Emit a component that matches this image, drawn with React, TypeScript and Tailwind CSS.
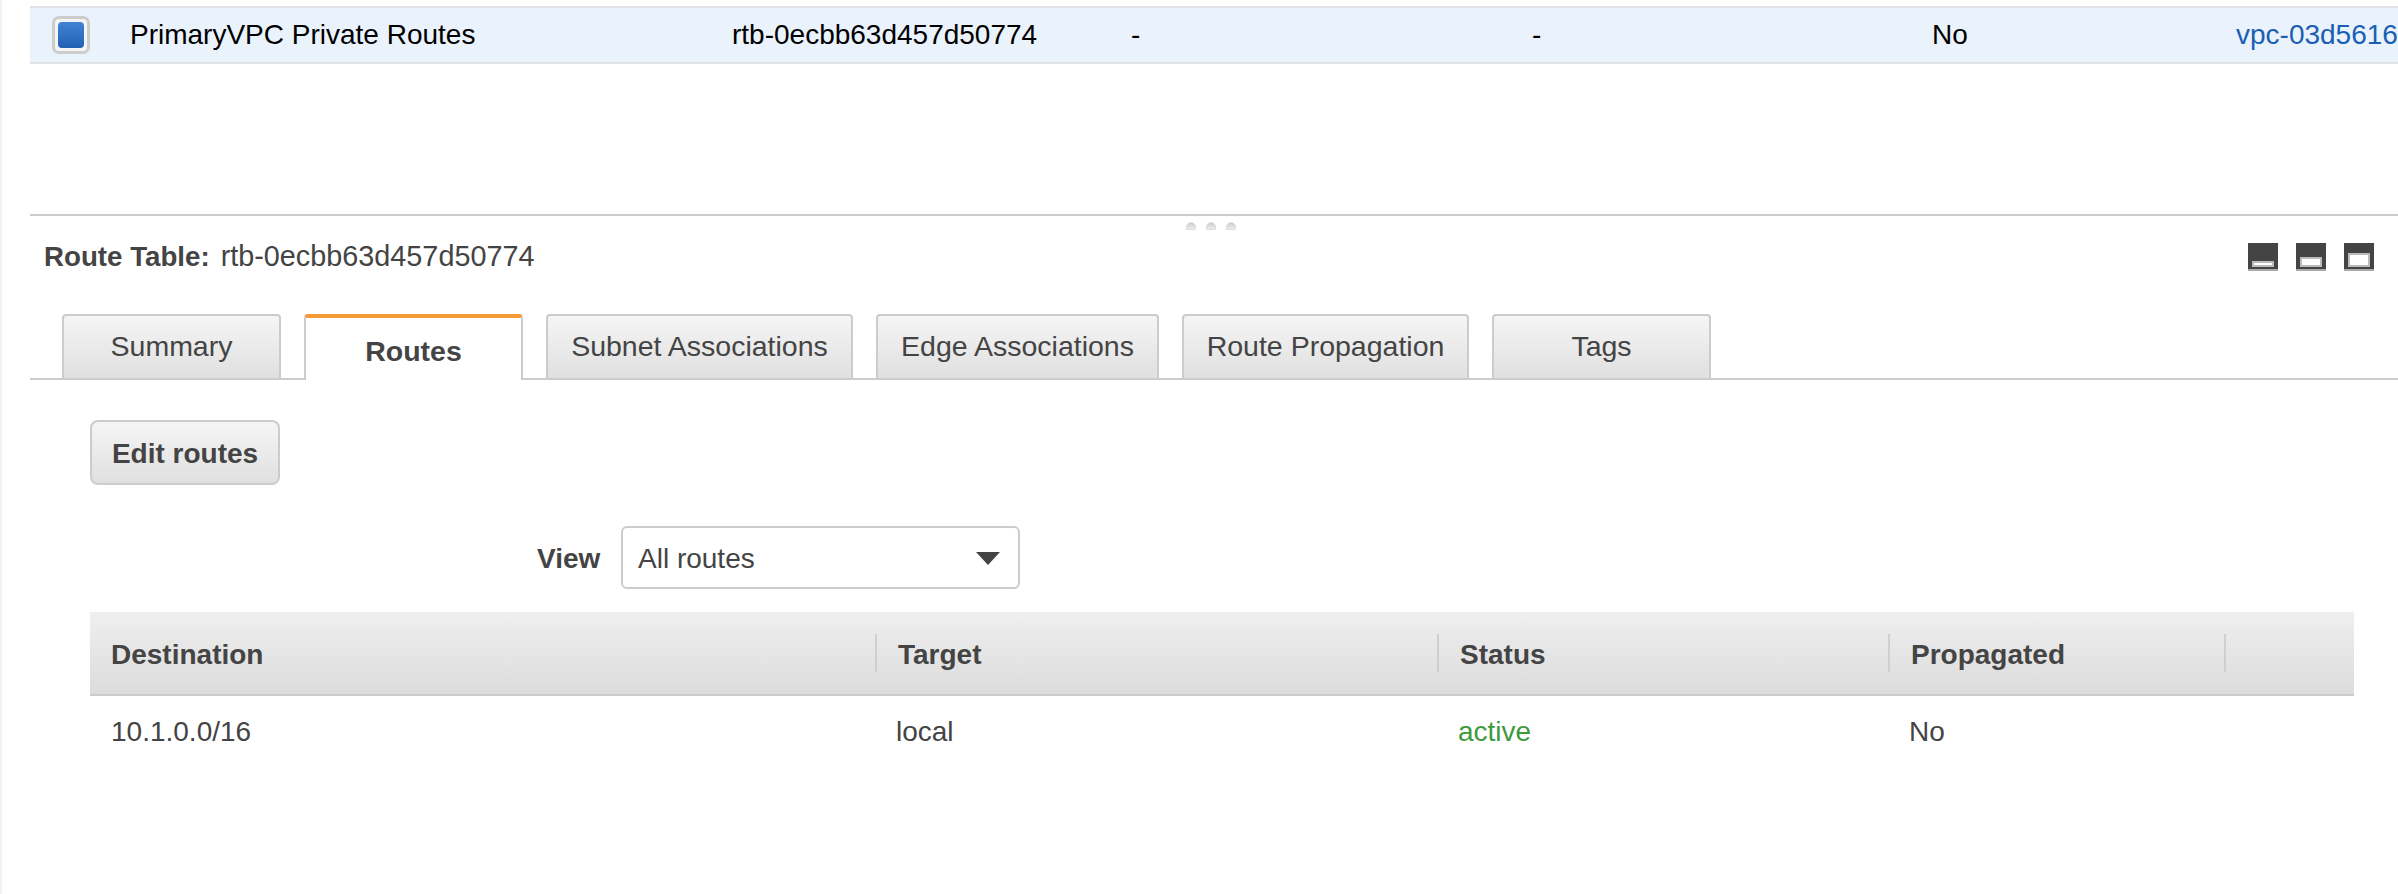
const tabs = [
  { label: "Summary", w: "w-[219px]" },
  { label: "Routes", w: "w-[219px]", active: true },
  { label: "Subnet Associations", w: "w-[307px]" },
  { label: "Edge Associations", w: "w-[283px]" },
  { label: "Route Propagation", w: "w-[287px]" },
  { label: "Tags", w: "w-[219px]" },
];

const columns = [
  { title: "Destination", value: "10.1.0.0/16", w: "w-[785px]" },
  { title: "Target", value: "local", w: "w-[562px]" },
  { title: "Status", value: "active", w: "w-[451px]", green: true },
  { title: "Propagated", value: "No", w: "w-[336px]" },
];

const PaneIcon = ({ inner }: { inner: string }) => (
  <div className="flex h-[28px] w-[30px] flex-col justify-end border-b-2 border-[#aaaaaa] bg-[#444444] px-[4px] pb-[2px]">
    <div className={`${inner} border-2 border-[#bbbbbb] bg-white`}></div>
  </div>
);

const GripDot = () => (
  <div className="h-[8px] w-[10px] rounded-t-full border border-[#dddddd] bg-gradient-to-b from-[#cccccc] to-[#eeeeee]"></div>
);

export default function App() {
  return (
    <div className="h-[894px] w-[2398px] overflow-hidden border-l-2 border-[#f2f2f2] bg-white pl-[28px] font-['Liberation_Sans',Arial,sans-serif] text-[28px] text-[#444444]">
      {/* selected row */}
      <div className="mt-[6px] flex h-[58px] items-center overflow-hidden whitespace-nowrap border-y-2 border-[#dfe3e8] bg-[#eaf2fc] text-[28px] text-black">
        <div className="w-[100px] shrink-0 pl-[22px]">
          <div className="flex h-[38px] w-[38px] items-center justify-center rounded-[7px] border-[3px] border-[#cccccc] bg-[#f4f4f4]">
            <div className="h-[26px] w-[26px] rounded-[4px] bg-gradient-to-b from-[#4282d4] to-[#2161b4]"></div>
          </div>
        </div>
        <div className="w-[602px] shrink-0">PrimaryVPC Private Routes</div>
        <div className="w-[399px] shrink-0">rtb-0ecbb63d457d50774</div>
        <div className="w-[401px] shrink-0">-</div>
        <div className="w-[400px] shrink-0">-</div>
        <div className="w-[304px] shrink-0">No</div>
        <div className="shrink-0 text-[#1a5fb4]">vpc-03d5616</div>
      </div>

      {/* splitter */}
      <div className="mt-[150px] flex h-[16px] items-end justify-center gap-[10px] border-t-2 border-[#cccccc] pr-[6px]">
        <GripDot />
        <GripDot />
        <GripDot />
      </div>

      {/* pane title */}
      <div className="mt-[13px] flex h-[28px] items-center justify-between pl-[14px] pr-[24px]">
        <div className="text-[28.8px]">
          <span className="text-[27.7px] font-bold">Route Table:</span> <span className="ml-[3px]">rtb-0ecbb63d457d50774</span>
        </div>
        <div className="flex gap-[18px]">
          <PaneIcon inner="h-[6px] w-[22px]" />
          <PaneIcon inner="h-[10px] w-[22px]" />
          <PaneIcon inner="h-[14px] w-[22px]" />
        </div>
      </div>

      {/* tabs */}
      <div className="mt-[43px] flex h-[66px] items-start gap-[23px] border-b-2 border-[#cccccc] pl-[32px] text-[28.5px]">
        {tabs.map((tab) =>
          tab.active ? (
            <div
              key={tab.label}
              className={`${tab.w} relative z-10 flex h-[66px] items-center justify-center rounded-t-[4px] border-x-2 border-t-4 border-x-[#cccccc] border-t-[#f59b36] bg-white pt-[4px] font-bold`}
            >
              {tab.label}
            </div>
          ) : (
            <div
              key={tab.label}
              className={`${tab.w} flex h-[64px] items-center justify-center rounded-t-[4px] border-x-2 border-t-2 border-[#cccccc] bg-gradient-to-b from-[#f5f5f5] to-[#e0e0e0] pb-[2px]`}
            >
              {tab.label}
            </div>
          ),
        )}
      </div>

      {/* tab content */}
      <div className="pl-[60px] pr-[44px]">
        <button className="mt-[40px] flex h-[65px] w-[190px] items-center justify-center rounded-[8px] border-2 border-[#cccccc] bg-gradient-to-b from-[#f5f5f5] to-[#e0e0e0] pt-[2px] text-[28px] font-bold">
          Edit routes
        </button>

        <div className="ml-[447px] mt-[41px] flex items-center text-[28px]">
          <span className="w-[84px] pt-[2px] font-bold">View</span>
          <div className="flex h-[63px] w-[399px] items-center justify-between rounded-[6px] border-2 border-[#cccccc] bg-white pl-[15px] pr-[18px] pt-[2px]">
            <span>All routes</span>
            <svg width="24" height="13" viewBox="0 0 24 13">
              <path d="M0 0h24L12 13z" fill="#444444" />
            </svg>
          </div>
        </div>

        <div className="mt-[23px] flex h-[84px] items-center border-b-2 border-[#cccccc] bg-gradient-to-b from-[#efefef] to-[#dcdcdc] text-[28px] font-bold">
          {columns.map((col, i) => (
            <div key={col.title} className={col.w}>
              <div className={`flex h-[38px] items-center pl-[21px] pt-[4px] ${i > 0 ? "border-l-2 border-[#cfcfcf]" : ""}`}>
                {col.title}
              </div>
            </div>
          ))}
          <div className="h-[38px] border-l-2 border-[#cfcfcf]"></div>
        </div>

        <div className="flex h-[72px] items-center text-[28px]">
          {columns.map((col) => (
            <div key={col.title} className={`${col.w} pl-[21px] ${col.green ? "text-[#3f9a3f]" : ""}`}>
              {col.value}
            </div>
          ))}
        </div>
      </div>
    </div>
  );
}
